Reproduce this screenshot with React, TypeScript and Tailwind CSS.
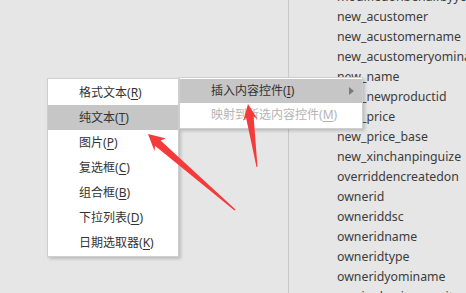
import React from 'react'

const fields = [
  'modifiedonbehalfbyyominame',
  'new_acustomer',
  'new_acustomername',
  'new_acustomeryominame',
  'new_name',
  'new_newproductid',
  'new_price',
  'new_price_base',
  'new_xinchanpinguize',
  'overriddencreatedon',
  'ownerid',
  'owneriddsc',
  'owneridname',
  'owneridtype',
  'owneridyominame',
  'owningbusinessunit',
]

const menuItems = [
  { label: '格式文本', key: 'R' },
  { label: '纯文本', key: 'T', active: true },
  { label: '图片', key: 'P' },
  { label: '复选框', key: 'C' },
  { label: '组合框', key: 'B' },
  { label: '下拉列表', key: 'D' },
  { label: '日期选取器', key: 'K' },
]

function Label({ label, k }: { label: string; k: string }) {
  return (
    <span>
      {label}(<u className="underline-offset-2">{k}</u>)
    </span>
  )
}

export default function App() {
  return (
    <div
      className="relative w-[466px] h-[293px] overflow-hidden bg-[#e6e6e6] text-[#3c3c3c]"
      style={{ fontFamily: '"Noto Sans", "Noto Sans CJK SC", sans-serif' }}
    >
      <div className="flex h-full">
        <div className="w-[289px] shrink-0 border-r border-[#c8c8c8]" />
        <div className="flex-1 pl-[48px] overflow-hidden">
          <ul className="-mt-[13px] whitespace-nowrap text-[12.3px]">
            {fields.map((f) => (
              <li key={f} className="h-[20px] leading-[20px]">
                {f}
              </li>
            ))}
          </ul>
        </div>
      </div>

      {/* context menu */}
      <div className="absolute left-[47px] top-[78px] w-[132px] bg-white border border-[#cfcfcf] py-px shadow-[2px_2px_3px_rgba(0,0,0,0.18)] text-[12px] text-[#333]">
        {menuItems.map((m) => (
          <div
            key={m.key}
            className={`h-[25px] leading-[25px] pl-[31px] ${m.active ? 'bg-[#c6c6c6]' : ''}`}
          >
            <Label label={m.label} k={m.key} />
          </div>
        ))}
      </div>

      {/* submenu */}
      <div className="absolute left-[179px] top-[77px] w-[184px] bg-white border border-[#cfcfcf] py-px shadow-[2px_2px_3px_rgba(0,0,0,0.18)] text-[12px]">
        <div className="h-[24px] leading-[24px] pl-[31px] bg-[#c6c6c6] text-[#333] flex items-center justify-between pr-[8px]">
          <Label label="插入内容控件" k="I" />
          <svg width="5" height="8" viewBox="0 0 5 8">
            <polygon points="0,0 5,4 0,8" fill="#7a7a7a" />
          </svg>
        </div>
        <div className="h-[24px] leading-[24px] pl-[31px] text-[#b4b4b4]">
          <Label label="映射到所选内容控件" k="M" />
        </div>
      </div>

      {/* red annotation arrows */}
      <svg className="absolute inset-0 pointer-events-none" width="466" height="293" viewBox="0 0 466 293">
        <polygon
          points="148,134 166,138.5 160.6,140.6 235.5,209.5 234.5,210.5 155,145.8 154.5,151"
          fill="#f43a3a"
        />
        <polygon
          points="248,104 257.5,119 253.6,116.6 257.5,167 256.5,167 246,117.6 243.2,121"
          fill="#f43a3a"
        />
      </svg>
    </div>
  )
}
